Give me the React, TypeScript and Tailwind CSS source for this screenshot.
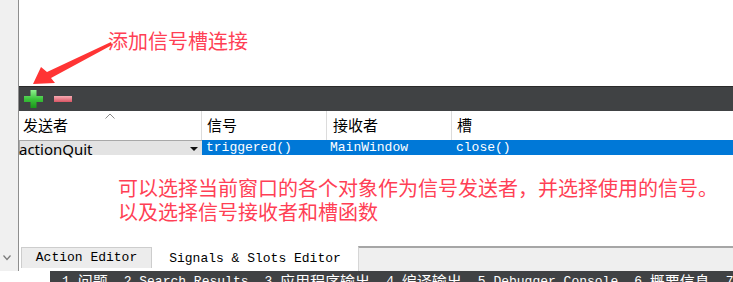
import React from 'react';

// Qt Designer: signal/slot editor dock, with red screenshot annotations

const MONO = "font-['Liberation_Mono','Noto_Sans_CJK_SC',monospace]";
const CJK = "font-['Noto_Sans','Noto_Sans_CJK_SC',sans-serif]";
const NOTE = "font-['Noto_Sans_CJK_SC',sans-serif]";

function PlusIcon() {
  return (
    <svg width="19" height="18" viewBox="0 0 19 18">
      <defs>
        <linearGradient id="plusG" x1="0" y1="0" x2="0" y2="1">
          <stop offset="0" stopColor="#8ff08f" />
          <stop offset="0.5" stopColor="#3cc43c" />
          <stop offset="1" stopColor="#1b951b" />
        </linearGradient>
      </defs>
      <path d="M6.5 0h6v6h6.5v6h-6.5v6h-6v-6h-6.5v-6h6.5z" fill="url(#plusG)" />
    </svg>
  );
}

function MinusIcon() {
  return (
    <svg width="18" height="6" viewBox="0 0 18 6">
      <defs>
        <linearGradient id="minusG" x1="0" y1="0" x2="0" y2="1">
          <stop offset="0" stopColor="#f6aab2" />
          <stop offset="1" stopColor="#d95564" />
        </linearGradient>
      </defs>
      <rect x="0" y="0" width="18" height="6" fill="url(#minusG)" />
    </svg>
  );
}

const BOTTOM_ITEMS: [string, string, boolean][] = [
  ['1', '问题', true],
  ['2', 'Search Results', false],
  ['3', '应用程序输出', true],
  ['4', '编译输出', true],
  ['5', 'Debugger Console', false],
  ['6', '概要信息', true],
  ['7', 'To-Do Entries', false],
];

export default function App() {
  return (
    <div className="relative w-[733px] h-[282px] overflow-hidden bg-white flex flex-col">
      <div className="flex h-[271px]">
        {/* left gutter */}
        <div className="w-[19px] shrink-0 bg-[#f0f0f0] border-r border-[#8e8e8e] flex flex-col justify-end pb-[10px] pl-[3px]">
          <svg width="8" height="6" viewBox="0 0 8 6">
            <path d="M0.5 0.5L4 4.5L7.5 0.5" fill="none" stroke="#7a7a7a" strokeWidth="1.2" />
          </svg>
        </div>

        <div className="flex-1 flex flex-col min-w-0">
          {/* upper white area with title annotation */}
          <div className={`h-[86px] pl-[89px] pt-[27px] ${NOTE} text-[20px] leading-[28px] text-[#ff3f55]`}>
            添加信号槽连接
          </div>

          {/* toolbar */}
          <div className="h-[25px] bg-[#404244] border-t border-[#2a2a2a] flex items-center pl-[5px] gap-[11px]">
            <PlusIcon />
            <MinusIcon />
          </div>

          {/* header */}
          <div className={`relative h-[29px] grid grid-cols-[183px_125px_125px_1fr] ${CJK} text-[15px] text-black`}>
            <div className="border-r border-[#dcdcdc] flex items-center pl-[4px]">发送者</div>
            <div className="border-r border-[#dcdcdc] flex items-center pl-[5px]">信号</div>
            <div className="border-r border-[#dcdcdc] flex items-center pl-[6px]">接收者</div>
            <div className="flex items-center pl-[5px]">槽</div>
            <svg className="absolute left-[86px] top-[2px]" width="10" height="6" viewBox="0 0 10 6">
              <path d="M0.5 5.5L5 1L9.5 5.5" fill="none" stroke="#8a8a8a" strokeWidth="1" />
            </svg>
          </div>

          {/* connection row */}
          <div className="h-[15px] grid grid-cols-[183px_125px_125px_1fr] text-[13px] leading-[15px]">
            <div className={`bg-[#e3e3e3] border-t border-l border-[#a8a8a8] flex items-end justify-between pr-[4px] ${CJK} text-[15px] leading-[15px] text-black`}>
              <span className="-ml-[1px] -mb-[2px]">actionQuit</span>
              <svg className="mb-[4px]" width="8" height="4" viewBox="0 0 8 4">
                <path d="M0 0h8L4 4z" fill="#111" />
              </svg>
            </div>
            <div className={`bg-[#0078d7] text-white pl-[4px] ${MONO}`}>triggered()</div>
            <div className={`bg-[#0078d7] text-white pl-[3px] ${MONO}`}>MainWindow</div>
            <div className={`bg-[#0078d7] text-white pl-[4px] ${MONO}`}>close()</div>
          </div>

          {/* empty area with annotation */}
          <div className={`flex-1 pl-[99px] pt-[21px] ${NOTE} text-[20px] leading-[24px] text-[#ff3f55]`}>
            <p>可以选择当前窗口的各个对象作为信号发送者，并选择使用的信号。</p>
            <p>以及选择信号接收者和槽函数</p>
          </div>

          {/* tab bar */}
          <div className={`h-[25px] flex items-start ${MONO} text-[13px] text-black`}>
            <div className="ml-[2px] mt-[1px] w-[131px] h-[21px] bg-[#ececec] border border-[#cdcdcd] border-b-0 flex items-center justify-center">
              Action Editor
            </div>
            <div className="w-[206px] h-[25px] bg-white flex items-center justify-center pt-[1px]">
              Signals &amp; Slots Editor
            </div>
            <div className="flex-1 h-[25px] bg-[#efefef] border-t-2 border-[#a6a6a6] border-l border-l-[#d6d6d6]" />
          </div>
        </div>
      </div>

      {/* bottom output pane bar */}
      <div className="h-[11px] bg-[#404244] flex items-start overflow-hidden">
        <div className="w-[50px] h-full bg-white shrink-0" />
        <div className="w-[1px] h-full bg-[#9a9a9a] ml-[1px]" />
        <div className={`flex gap-[16px] ml-[11px] pt-[3px] ${MONO} text-[13px] leading-[15px] text-white whitespace-pre`}>
          {BOTTOM_ITEMS.map(([n, label, cjk]) => (
            <span key={n} className="flex items-start">
              <span>{n} </span>
              <span className={cjk ? `${CJK} text-[15px] leading-[15px]` : ''}>{label}</span>
            </span>
          ))}
        </div>
      </div>

      {/* annotation arrow */}
      <svg className="absolute inset-0 pointer-events-none" width="733" height="282" viewBox="0 0 733 282">
        <polygon
          points="111,42 47,72 41,67 33,84 55,83 51,78 112,45"
          fill="#ff3434"
        />
      </svg>
    </div>
  );
}
